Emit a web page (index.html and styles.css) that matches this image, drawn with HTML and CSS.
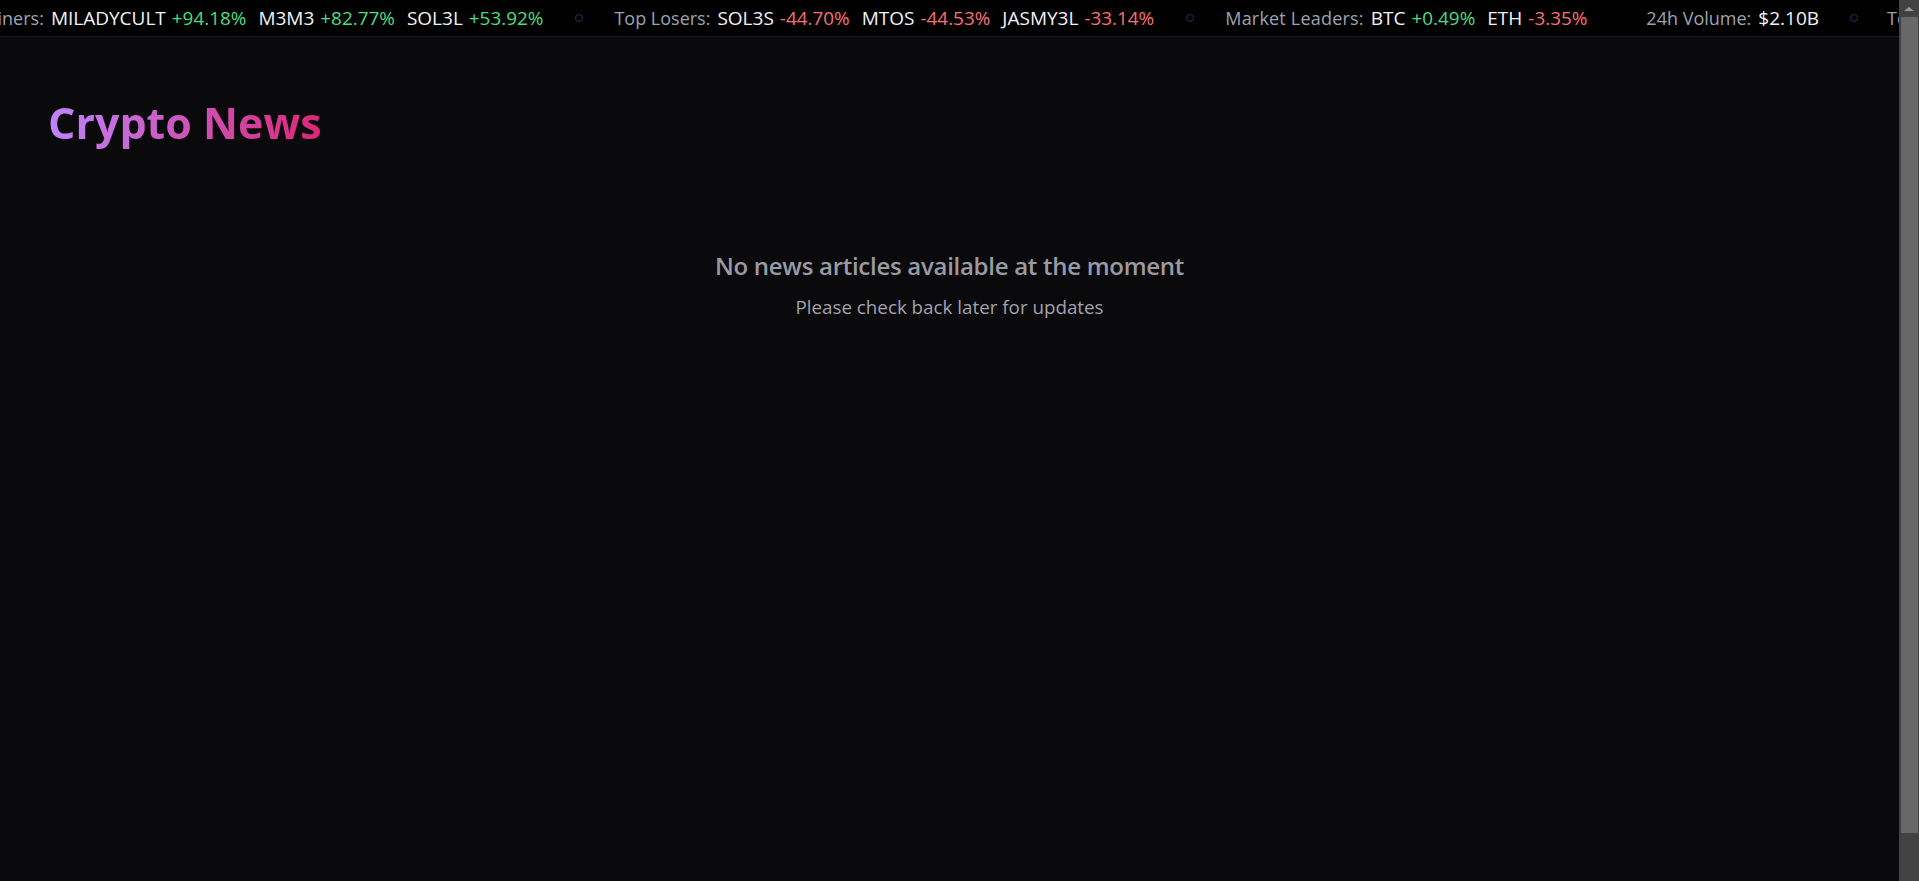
FILE: index.html
```html
<!DOCTYPE html>
<html lang="en">
<head>
<meta charset="utf-8">
<title>Crypto News</title>
<link rel="stylesheet" href="styles.css">
</head>
<body>
<div class="window">
  <div class="page">
    <div class="ticker">
      <div class="track">
        <div class="group">
          <span class="label">Top Gainers:</span>
          <span class="item"><span class="sym">MILADYCULT</span><span class="up">+94.18%</span></span>
          <span class="item"><span class="sym">M3M3</span><span class="up">+82.77%</span></span>
          <span class="item"><span class="sym">SOL3L</span><span class="up">+53.92%</span></span>
        </div>
        <span class="sep"></span>
        <div class="group">
          <span class="label">Top Losers:</span>
          <span class="item"><span class="sym">SOL3S</span><span class="down">-44.70%</span></span>
          <span class="item"><span class="sym">MTOS</span><span class="down">-44.53%</span></span>
          <span class="item"><span class="sym">JASMY3L</span><span class="down">-33.14%</span></span>
        </div>
        <span class="sep"></span>
        <div class="group">
          <span class="label label-wide">Market Leaders:</span>
          <span class="item"><span class="sym">BTC</span><span class="up">+0.49%</span></span>
          <span class="item"><span class="sym">ETH</span><span class="down">-3.35%</span></span>
        </div>
        <div class="group group-wide">
          <span class="label">24h Volume:</span>
          <span class="item"><span class="sym">$2.10B</span></span>
        </div>
        <span class="sep sep-tight"></span>
        <div class="group">
          <span class="label">Top Gainers:</span>
          <span class="item"><span class="sym">MILADYCULT</span><span class="up">+94.18%</span></span>
        </div>
      </div>
    </div>
    <main class="content">
      <h1 class="title">Crypto News</h1>
      <div class="empty">
        <p class="empty-title">No news articles available at the moment</p>
        <p class="empty-sub">Please check back later for updates</p>
      </div>
    </main>
  </div>
  <div class="scrollbar">
    <div class="sb-up"><span class="sb-arrow"></span></div>
    <div class="sb-thumb"></div>
    <div class="sb-rest"></div>
  </div>
</div>
</body>
</html>
```

FILE: styles.css
```css
html, body {
  margin: 0;
  padding: 0;
  height: 100%;
  overflow: hidden;
}
body {
  background: #0a0a0d;
  font-family: "Open Sans", "Noto Sans", sans-serif;
  color: #e5e7eb;
}
.window {
  display: flex;
  height: 100%;
}
.page {
  flex: 1;
  min-width: 0;
  display: flex;
  flex-direction: column;
  overflow: hidden;
}
.ticker {
  background: #000;
  border-bottom: 1px solid #1f1330;
  height: 36px;
  overflow: hidden;
  flex-shrink: 0;
}
.track {
  display: flex;
  align-items: center;
  height: 36px;
  white-space: nowrap;
  font-size: 18px;
  transform: translateX(-62px);
}
.group {
  display: flex;
  align-items: center;
}
.group-wide {
  margin-left: 59px;
}
.label {
  color: #9ca3af;
  margin-right: 7px;
}
.label-wide {
  letter-spacing: 0.2px;
}
.item {
  display: flex;
  align-items: center;
  margin-right: 12px;
}
.item:last-child {
  margin-right: 0;
}
.sym {
  color: #f3f4f6;
  font-size: 19px;
  font-weight: 500;
  margin-right: 6px;
}
.item .sym:last-child {
  margin-right: 0;
}
.up,
.down {
  font-size: 18.9px;
}
.up {
  color: #4ade80;
}
.down {
  color: #f87171;
}
.sep {
  width: 6px;
  height: 6px;
  border: 1px solid #3d2463;
  border-radius: 50%;
  margin: 0 31px 0 32px;
  flex-shrink: 0;
}
.sep-tight {
  margin: 0 29px 0 31px;
}
.content {
  padding: 0 48px;
  flex: 1;
}
.title {
  margin: 60px 0 0 0;
  font-size: 43px;
  font-weight: 700;
  line-height: 1.2;
  display: inline-block;
  background: linear-gradient(90deg, #c084fc, #db2777);
  -webkit-background-clip: text;
  background-clip: text;
  color: transparent;
}
.empty {
  text-align: center;
  margin-top: 101px;
}
.empty-title {
  margin: 0;
  font-size: 24px;
  letter-spacing: -0.28px;
  line-height: 32px;
  font-weight: 600;
  color: #9a9aa3;
}
.empty-sub {
  margin: 11px 0 0 0;
  font-size: 18.8px;
  line-height: 28px;
  color: #a3a3ab;
}
.scrollbar {
  width: 20px;
  flex-shrink: 0;
  background: #424242;
  display: flex;
  flex-direction: column;
}
.sb-up {
  height: 17px;
  display: flex;
  align-items: center;
  justify-content: center;
}
.sb-arrow {
  width: 0;
  height: 0;
  border-left: 5px solid transparent;
  border-right: 5px solid transparent;
  border-bottom: 4px solid #9a9a9a;
}
.sb-thumb {
  height: 816px;
  margin: 0 1px 0 2px;
  background: #686868;
}
.sb-rest {
  flex: 1;
}
```
